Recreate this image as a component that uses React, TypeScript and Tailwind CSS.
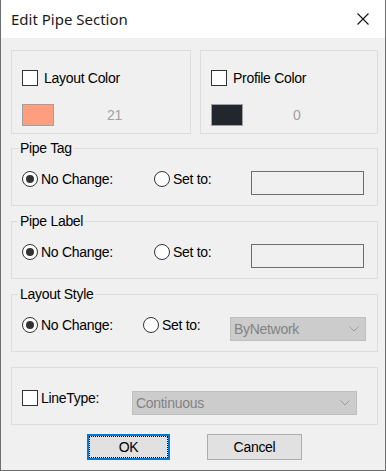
import React from "react";

function Checkbox() {
  return <div className="w-4 h-4 border border-[#333333] bg-white shrink-0" />;
}

function Radio({ checked }: { checked?: boolean }) {
  return (
    <div className="w-4 h-4 rounded-full border border-[#333333] bg-white flex items-center justify-center shrink-0">
      {checked && <div className="w-2 h-2 rounded-full bg-[#333333]" />}
    </div>
  );
}

function Chevron() {
  return (
    <svg width="10" height="6" viewBox="0 0 10 6" className="shrink-0">
      <path d="M0.5 0.5 L5 5 L9.5 0.5" fill="none" stroke="#9a9a9a" strokeWidth="1" />
    </svg>
  );
}

function Group({ title, children, className = "" }: { title?: string; children: React.ReactNode; className?: string }) {
  return (
    <div className={"relative h-[58px] border border-[#dcdcdc] flex items-center pl-[10px] pt-[4px] " + className}>
      {title && (
        <span className="absolute left-[6px] top-[-10px] px-[2px] bg-[#f0f0f0] leading-[18px]">{title}</span>
      )}
      {children}
    </div>
  );
}

export default function App() {
  return (
    <div className="w-[386px] h-[471px] flex flex-col bg-[#f0f0f0] border-x border-b border-[#6e6e6e] text-black text-[14px] tracking-[-0.3px] leading-[16px] font-['Liberation_Sans',Arial,sans-serif]">
      <div className="h-[38px] shrink-0 bg-white flex items-center justify-between pl-[10px] pr-[16px]">
        <span className="text-[15px] tracking-normal font-['Noto_Sans',sans-serif] text-[#1a1a1a]">Edit Pipe Section</span>
        <svg width="12" height="12" viewBox="0 0 12 12">
          <path d="M0.5 0.5 L11.5 11.5 M11.5 0.5 L0.5 11.5" stroke="#111" strokeWidth="1.1" />
        </svg>
      </div>
      <div className="flex flex-col pl-[10px] pr-[7px] pt-[12px]">
        <div className="flex gap-[9px] h-[84px]">
          <div className="w-[180px] border border-[#dcdcdc] flex flex-col pl-[10px] pt-[19px]">
            <div className="flex items-center h-4">
              <Checkbox />
              <span className="ml-[6px]">Layout Color</span>
            </div>
            <div className="flex items-center mt-[18px]">
              <div className="w-[32px] h-[22px] bg-[#ff9e7e] border border-[#a0a0a0]" />
              <span className="ml-[53px] text-[#a0a0a0]">21</span>
            </div>
          </div>
          <div className="w-[178px] border border-[#dcdcdc] flex flex-col pl-[10px] pt-[19px]">
            <div className="flex items-center h-4">
              <Checkbox />
              <span className="ml-[6px]">Profile Color</span>
            </div>
            <div className="flex items-center mt-[18px]">
              <div className="w-[32px] h-[22px] bg-[#22272e] border border-[#a0a0a0]" />
              <span className="ml-[50px] text-[#a0a0a0]">0</span>
            </div>
          </div>
        </div>

        <Group title="Pipe Tag" className="mt-[14px]">
          <div className="w-[132px] flex items-center">
            <Radio checked />
            <span className="ml-[3px]">No Change:</span>
          </div>
          <div className="w-[97px] flex items-center">
            <Radio />
            <span className="ml-[3px]">Set to:</span>
          </div>
          <div className="w-[113px] h-[24px] border border-[#6e6e6e] mt-[8px]" />
        </Group>

        <Group title="Pipe Label" className="mt-[15px]">
          <div className="w-[132px] flex items-center">
            <Radio checked />
            <span className="ml-[3px]">No Change:</span>
          </div>
          <div className="w-[97px] flex items-center">
            <Radio />
            <span className="ml-[3px]">Set to:</span>
          </div>
          <div className="w-[113px] h-[24px] border border-[#6e6e6e] mt-[8px]" />
        </Group>

        <Group title="Layout Style" className="mt-[15px]">
          <div className="w-[121px] flex items-center">
            <Radio checked />
            <span className="ml-[3px]">No Change:</span>
          </div>
          <div className="w-[87px] flex items-center">
            <Radio />
            <span className="ml-[3px]">Set to:</span>
          </div>
          <div className="w-[136px] h-[24px] bg-[#cccccc] border border-[#bfbfbf] flex items-center justify-between pl-[3px] pr-[6px] text-[#838383] mt-[8px]">
            <span>ByNetwork</span>
            <Chevron />
          </div>
        </Group>

        <Group className="mt-[15px]">
          <div className="w-[110px] flex items-center">
            <Checkbox />
            <span className="ml-[3px]">LineType:</span>
          </div>
          <div className="w-[225px] h-[24px] bg-[#cccccc] border border-[#bfbfbf] flex items-center justify-between pl-[3px] pr-[6px] text-[#838383] mt-[10px]">
            <span>Continuous</span>
            <Chevron />
          </div>
        </Group>

        <div className="flex pl-[76px] gap-[37px] mt-[9px]">
          <div className="w-[83px] h-[26px] border-2 border-[#0078d7] bg-[#e1e1e1] flex items-center justify-center outline-1 outline-dotted outline-black outline-offset-[-3px]">
            OK
          </div>
          <div className="w-[95px] h-[26px] border border-[#adadad] bg-[#e1e1e1] flex items-center justify-center">
            Cancel
          </div>
        </div>
      </div>
    </div>
  );
}
